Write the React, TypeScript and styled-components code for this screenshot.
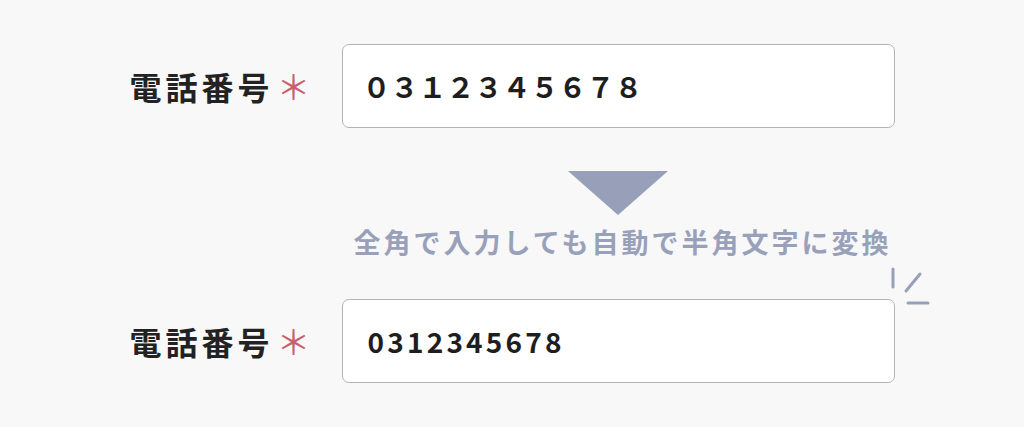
import React from "react";
import styled, { createGlobalStyle } from "styled-components";

const GlobalStyle = createGlobalStyle`
  html, body {
    margin: 0;
    padding: 0;
    background: #f8f8f8;
  }
  body {
    font-family: "Noto Sans CJK JP", "Noto Sans", sans-serif;
  }
`;

const Page = styled.div`
  display: flex;
  justify-content: center;
  padding-top: 44px;
`;

const Grid = styled.div`
  display: grid;
  grid-template-columns: 172px 553px;
  column-gap: 40px;
  align-items: center;
`;

const Label = styled.div`
  display: flex;
  align-items: center;
  font-size: 32px;
  font-weight: 700;
  color: #222222;
  letter-spacing: 4px;
  line-height: 1;
  white-space: nowrap;
`;

const Required = styled.span`
  color: #c8606e;
  font-weight: 400;
  font-size: 34px;
  letter-spacing: 0;
  margin-left: 3px;
`;

const InputBox = styled.div`
  position: relative;
  box-sizing: border-box;
  height: 84px;
  background: #ffffff;
  border: 1.5px solid #b4b4b8;
  border-radius: 7px;
  display: flex;
  align-items: center;
  padding-left: 25px;
`;

const Value = styled.span<{ $spacing: number; $indent: number }>`
  font-size: 28px;
  font-weight: 700;
  color: #1e1e1e;
  letter-spacing: ${(p) => p.$spacing}px;
  margin-left: ${(p) => p.$indent}px;
  line-height: 1;
`;

const Middle = styled.div`
  grid-column: 2;
  display: flex;
  flex-direction: column;
  align-items: center;
  padding-top: 43px;
  padding-bottom: 41px;
`;

const Triangle = styled.div`
  width: 0;
  height: 0;
  border-left: 50.5px solid transparent;
  border-right: 50.5px solid transparent;
  border-top: 44px solid #97a0b8;
`;

const Note = styled.div`
  margin-top: 11px;
  margin-left: 9px;
  font-size: 27px;
  font-weight: 700;
  color: #98a1b9;
  letter-spacing: 3px;
  line-height: 1.2;
  white-space: nowrap;
`;

const Sparkle = styled.svg`
  position: absolute;
  left: 540px;
  top: -40px;
  width: 50px;
  height: 50px;
  overflow: visible;
`;

export default function App() {
  return (
    <>
      <GlobalStyle />
      <Page>
        <Grid>
          <Label>
            電話番号<Required>＊</Required>
          </Label>
          <InputBox>
            <Value $spacing={0} $indent={-5}>０３１２３４５６７８</Value>
          </InputBox>

          <Middle>
            <Triangle />
            <Note>全角で入力しても自動で半角文字に変換</Note>
          </Middle>

          <Label>
            電話番号<Required>＊</Required>
          </Label>
          <InputBox>
            <Value $spacing={3.2} $indent={0}>0312345678</Value>
            <Sparkle viewBox="0 0 50 50" aria-hidden="true">
              <g stroke="#97a0b8" strokeWidth="3" strokeLinecap="round" fill="none">
                <line x1="10" y1="9" x2="10" y2="27" />
                <line x1="37" y1="14" x2="23" y2="31" />
                <line x1="25" y1="43" x2="45" y2="43" />
              </g>
            </Sparkle>
          </InputBox>
        </Grid>
      </Page>
    </>
  );
}
